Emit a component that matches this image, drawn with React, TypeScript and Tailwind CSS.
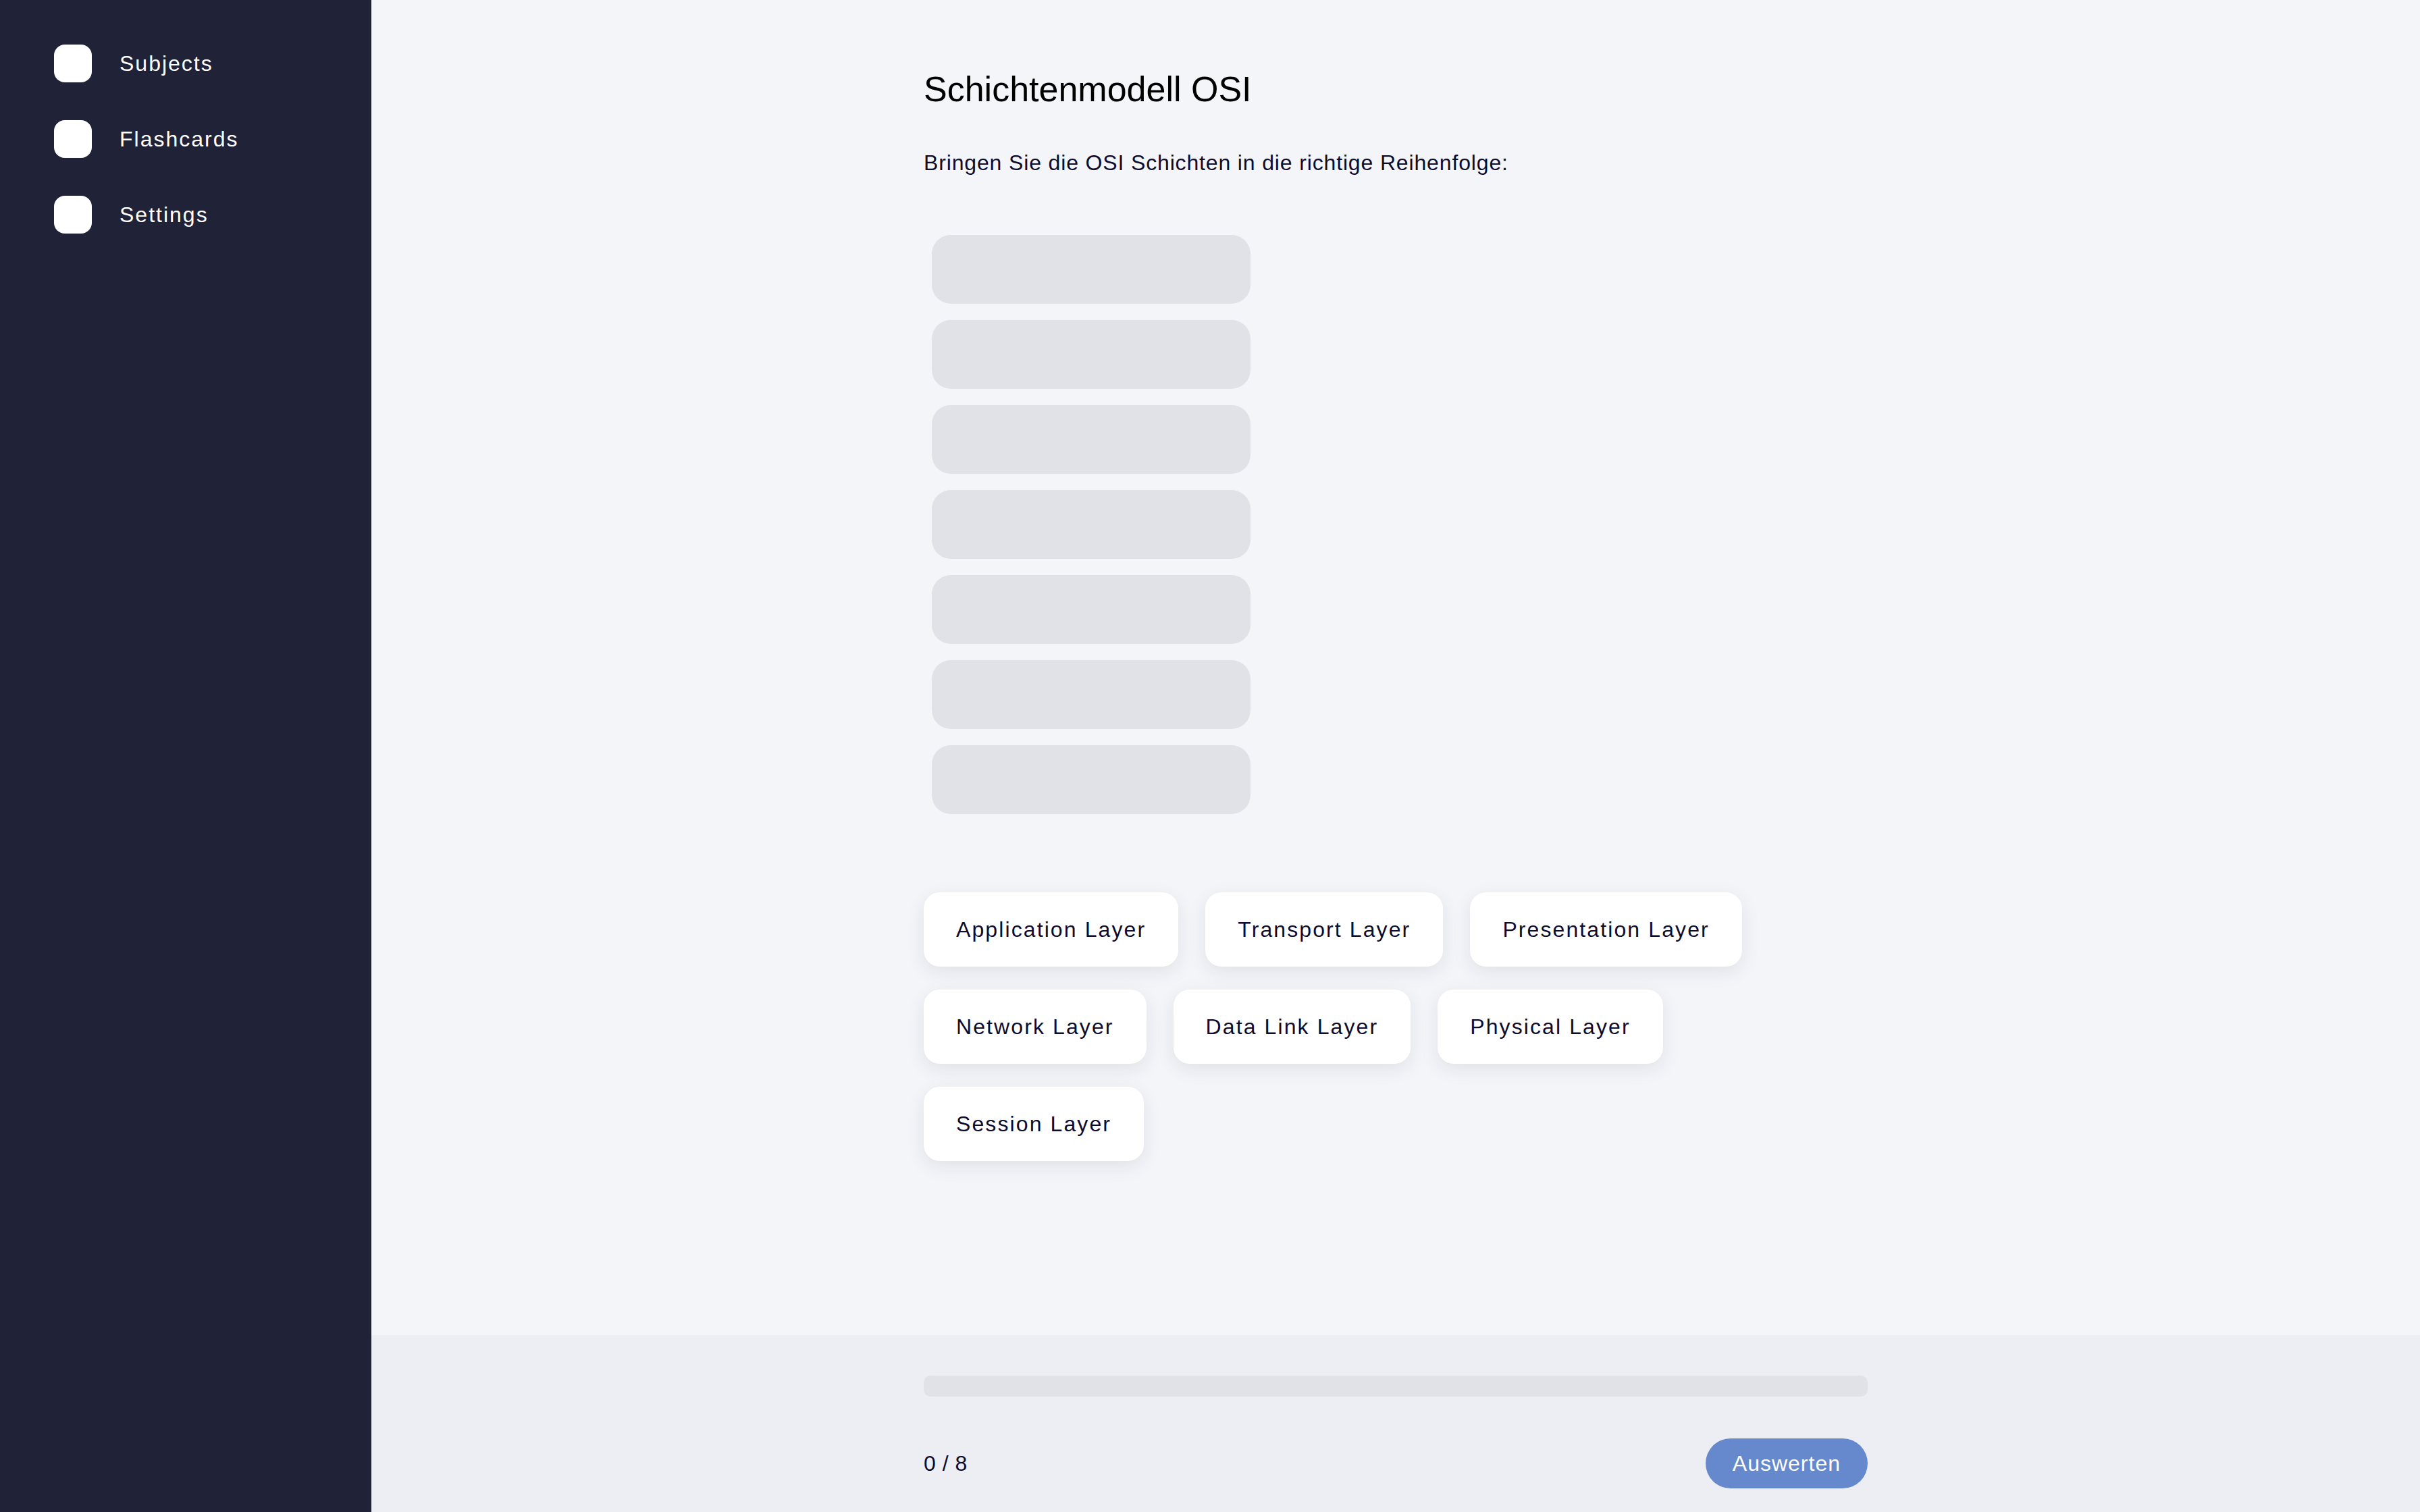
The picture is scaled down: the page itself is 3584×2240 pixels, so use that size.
import React from 'react';

const navItems = ['Subjects', 'Flashcards', 'Settings'];

const layers = [
  'Application Layer',
  'Transport Layer',
  'Presentation Layer',
  'Network Layer',
  'Data Link Layer',
  'Physical Layer',
  'Session Layer',
];

const slotCount = 7;

const Sidebar: React.FC = () => (
  <aside className="w-[550px] shrink-0 bg-[#202238] pt-[38px] pl-[80px]">
    {navItems.map(item => (
      <div key={item} className="h-[112px] flex items-center gap-[41px]">
        <div className="w-[56px] h-[56px] rounded-[16px] bg-white" />
        <span className="text-[32px] tracking-[2px] text-white">{item}</span>
      </div>
    ))}
  </aside>
);

export default function App() {
  return (
    <div
      className="flex w-full h-[2240px] overflow-hidden bg-[#f4f5f9]"
      style={{ fontFamily: '"Liberation Sans", Arial, sans-serif' }}
    >
      <Sidebar />

      <main className="flex-1 flex flex-col min-w-0">
        {/* Question area */}
        <div className="flex-1 overflow-y-auto">
          <div className="max-w-[1398px] mx-auto pt-[102px]">
            <h1 className="text-[52px] leading-[60px] text-black">Schichtenmodell OSI</h1>
            <p className="mt-[59px] text-[32px] leading-[40px] tracking-[0.85px] text-[#0e0c2c]">
              Bringen Sie die OSI Schichten in die richtige Reihenfolge:
            </p>

            {/* Drop slots */}
            <div className="mt-[87px] px-[12px] flex flex-col gap-[24px]">
              {Array.from({ length: slotCount }).map((_, i) => (
                <div key={i} className="w-[472px] h-[102px] rounded-[28px] bg-[#e1e2e7]" />
              ))}
            </div>

            {/* Answer chips */}
            <div className="mt-[116px] flex flex-wrap gap-x-[40px] gap-y-[34px] max-w-[1260px]">
              {layers.map(layer => (
                <button
                  key={layer}
                  className="h-[110px] px-[48px] rounded-[24px] bg-white text-[32px] tracking-[2.1px] text-[#0e0c2c] shadow-[0_8px_28px_rgba(30,32,60,0.09)]"
                >
                  {layer}
                </button>
              ))}
            </div>
          </div>
        </div>

        {/* Footer */}
        <footer className="h-[262px] shrink-0 bg-[#edeef3]">
          <div className="max-w-[1398px] mx-auto pt-[60px]">
            <div className="h-[31px] rounded-[10px] bg-[#e1e2e7]" />
            <div className="mt-[62px] flex items-center justify-between">
              <span className="text-[32px] tracking-[0.5px] text-[#0e0c2c]">0 / 8</span>
              <button className="h-[74px] px-[40px] rounded-full bg-[#6589cc] text-[32px] tracking-[1px] text-white">
                Auswerten
              </button>
            </div>
          </div>
        </footer>
      </main>
    </div>
  );
}
